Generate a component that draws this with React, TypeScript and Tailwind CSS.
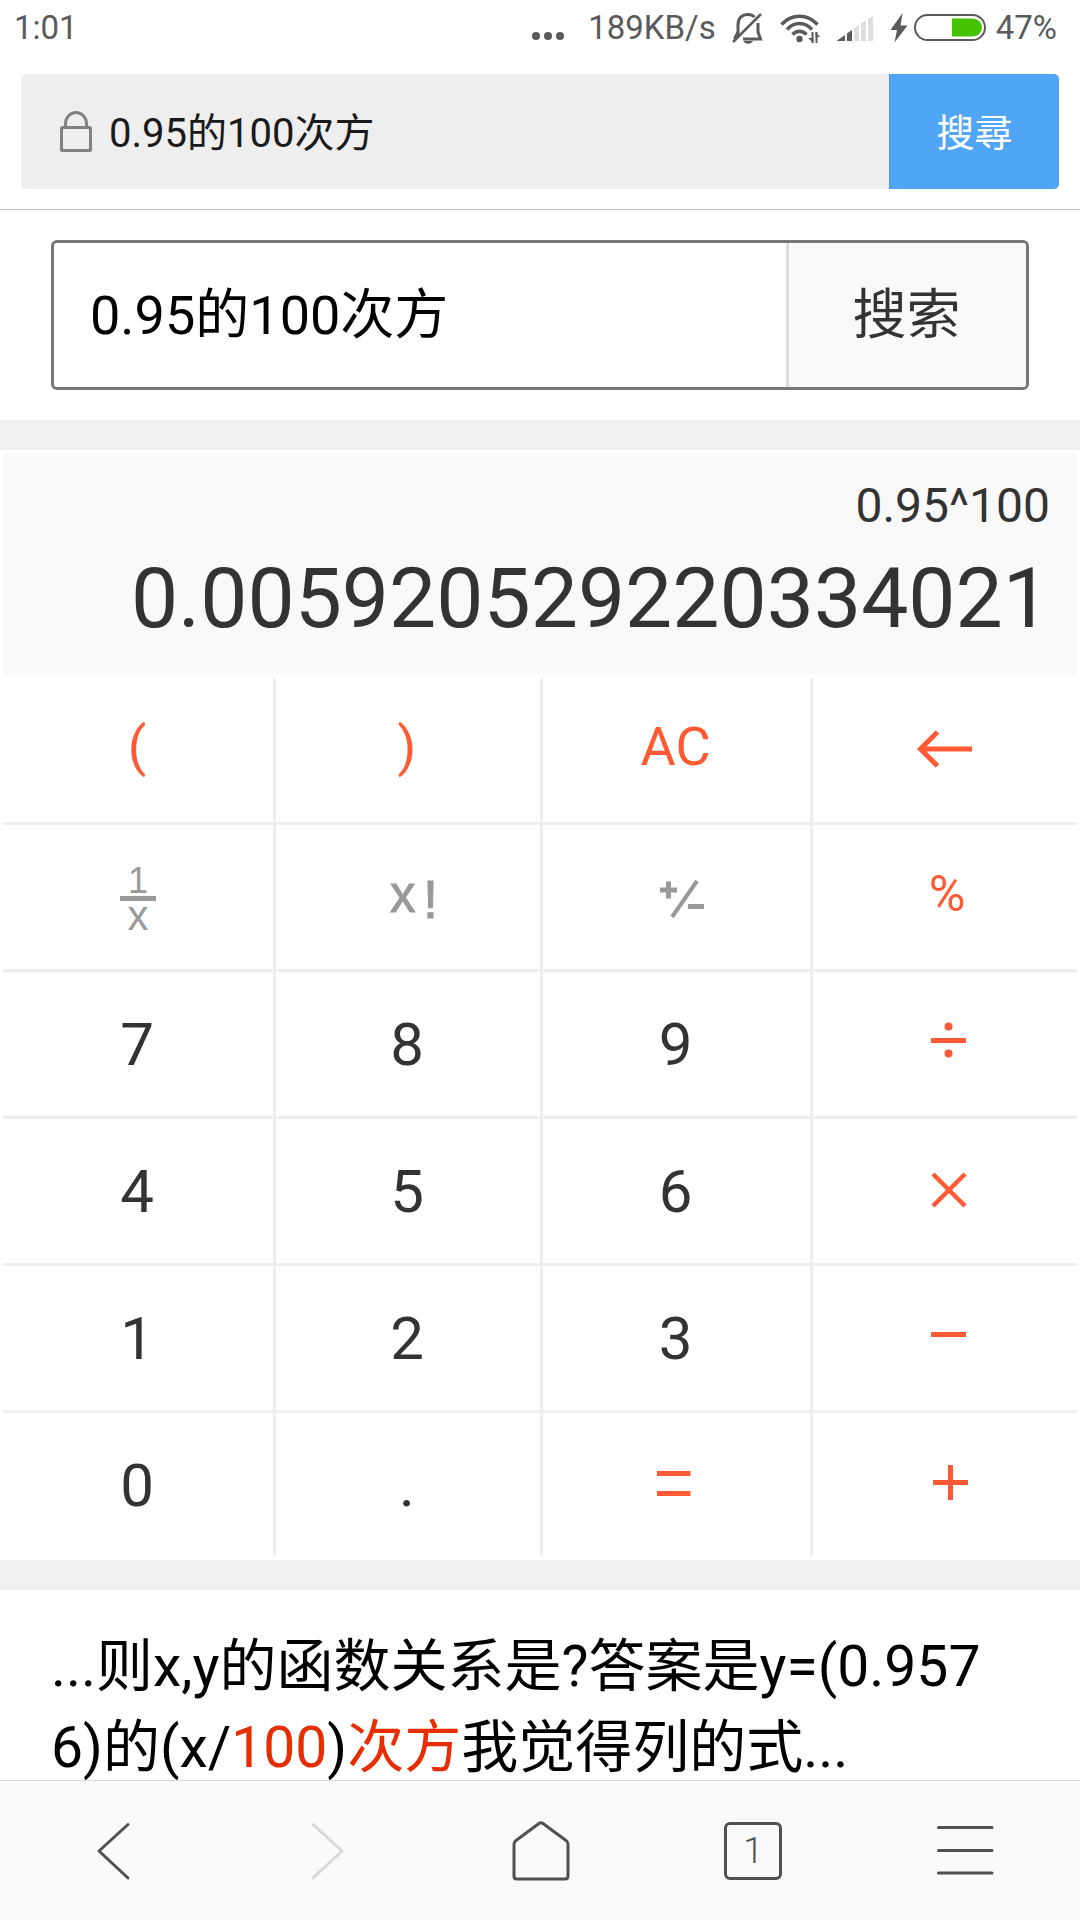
import React, { useState } from 'react';

type KeyDef = {
  label: string;
  content: React.ReactNode;
  className: string;
};

const digit = 'text-[60px] text-[#333] pt-0.5 pr-0.5';
const action = 'text-[54px] text-[#ff5a33] pb-2 pr-0.5';
const operator = 'text-[#ff5a33]';
const muted = 'text-[#999]';

const KeyIcon: React.FC<{ children: React.ReactNode }> = ({ children }) => (
  <svg
    width="64"
    height="64"
    viewBox="-32 -32 64 64"
    fill="none"
    stroke="currentColor"
    strokeWidth="5"
    className="overflow-visible"
  >
    {children}
  </svg>
);

const keys: KeyDef[] = [
  { label: 'open bracket', content: '(', className: action },
  { label: 'close bracket', content: ')', className: action },
  { label: 'all clear', content: 'AC', className: action },
  {
    label: 'backspace',
    className: operator,
    content: (
      <KeyIcon>
        <path d="M27 -1H-25M-7.500 -18L-24.500 -1L-7.500 16" />
      </KeyIcon>
    ),
  },
  {
    label: 'reciprocal',
    className: muted,
    content: (
      <span className="flex flex-col items-center pt-0.5 font-['Liberation_Sans',sans-serif]">
        <span className="text-[36px] leading-[30px]">1</span>
        <span className="h-[5px] w-9 bg-[#999]" />
        <span className="text-[42px] leading-[30px]">x</span>
      </span>
    ),
  },
  {
    label: 'factorial',
    className: muted,
    content: (
      <KeyIcon>
        <g fill="currentColor" strokeWidth="1" fontFamily="Liberation Sans, sans-serif">
          <text x="-18" y="15" fontSize="51">x</text>
          <text x="15" y="21" fontSize="54">!</text>
        </g>
      </KeyIcon>
    ),
  },
  {
    label: 'plus minus',
    className: muted,
    content: (
      <KeyIcon>
        <path d="M-17 -7H0M-8.500 -15.500V1.500M11 9.500H27" />
        <path d="M20 -16L-5 20" strokeWidth="4" />
      </KeyIcon>
    ),
  },
  { label: 'percent', content: '%', className: 'text-[50px] text-[#ff5a33] pb-1.5 pl-1' },
  { label: '7', content: '7', className: digit },
  { label: '8', content: '8', className: digit },
  { label: '9', content: '9', className: digit },
  {
    label: 'divide',
    className: operator,
    content: (
      <KeyIcon>
        <path d="M-14 -3.500H21" />
        <g fill="currentColor" stroke="none">
          <circle cx="3.500" cy="-17.500" r="4" />
          <circle cx="3.500" cy="9.500" r="4" />
        </g>
      </KeyIcon>
    ),
  },
  { label: '4', content: '4', className: digit },
  { label: '5', content: '5', className: digit },
  { label: '6', content: '6', className: digit },
  {
    label: 'multiply',
    className: operator,
    content: (
      <KeyIcon>
        <path d="M-12 -17L20 15M20 -17L-12 15" strokeWidth="4.500" />
      </KeyIcon>
    ),
  },
  { label: '1', content: '1', className: digit },
  { label: '2', content: '2', className: digit },
  { label: '3', content: '3', className: digit },
  {
    label: 'subtract',
    className: operator,
    content: (
      <KeyIcon>
        <path d="M-14 -3.500H21" />
      </KeyIcon>
    ),
  },
  { label: '0', content: '0', className: digit },
  { label: 'decimal point', content: '.', className: digit },
  {
    label: 'equals',
    className: operator,
    content: (
      <KeyIcon>
        <path d="M-20 -11.500H13.500M-20 8.500H13.500" />
      </KeyIcon>
    ),
  },
  {
    label: 'add',
    className: operator,
    content: (
      <KeyIcon>
        <path d="M-12 -2.500H23M5.500 -20V15" />
      </KeyIcon>
    ),
  },
];

const StatusBar: React.FC = () => (
  <div className="flex h-14 items-center justify-between pl-3.5 pr-[23px] font-['Roboto',sans-serif] text-[33px] leading-10 text-[#5a5a5a]">
    <span>1:01</span>
    <div className="flex items-center">
      <svg width="32" height="32" viewBox="0 0 32 32" fill="currentColor" className="mr-6">
        <circle cx="4" cy="24" r="4" />
        <circle cx="16" cy="24" r="4" />
        <circle cx="28" cy="24" r="4" />
      </svg>
      <span className="mr-4">189KB/s</span>
      {/* muted bell */}
      <svg width="32" height="32" viewBox="0 0 32 32" fill="none" stroke="currentColor" strokeWidth="3" className="mr-4">
        <path d="M6 23V13C6 6 10 2.500 16 2.500C18.500 2.500 21 3.500 22.500 5M26 11V20L28.500 27H11M6 20L2.500 27" />
        <path d="M1 30L29 2" strokeWidth="2.500" />
        <path d="M11.500 29H21C20 31 18.500 31.700 16.300 31.700C14 31.700 12.500 31 11.500 29Z" fill="currentColor" stroke="none" />
      </svg>
      {/* wifi with traffic arrows */}
      <svg width="40" height="30" viewBox="0 0 40 30" fill="none" stroke="currentColor" strokeWidth="3.500" className="mr-4">
        <path d="M1.500 11.500C11.500 0.500 27.500 0.500 37.500 11.500M7 16.500C14 8.500 25 8.500 32 16.500M12.500 21.500C16.500 17 22.500 17 26.500 21.500" />
        <circle cx="19.500" cy="26" r="3.200" fill="currentColor" stroke="none" />
        <path d="M32.500 19V30M36.500 19V30" strokeWidth="2" />
        <path d="M28 25L33.500 30V25ZM35.500 19V24H40Z" fill="currentColor" stroke="none" />
      </svg>
      <svg width="38" height="28" viewBox="0 0 38 28" fill="#dedede" className="mr-4">
        <path d="M0.500 27L9 21V27Z" fill="#5a5a5a" />
        <path d="M11 19.500L16 16V27H11Z" fill="#5a5a5a" />
        <path d="M18 14L23 11V27H18ZM25 9.500L30 6.500V27H25ZM32 5L37 2V27H32Z" />
      </svg>
      {/* charging bolt */}
      <svg width="18" height="30" viewBox="0 0 18 30" fill="currentColor" className="mr-1.5">
        <path d="M12.500 0L0.500 17H7L4.500 29.500L17.500 12.500H10.500Z" />
      </svg>
      <svg width="72" height="28" viewBox="0 0 72 28" className="mr-2.5">
        <rect x="1" y="1" width="70" height="25" rx="12.500" fill="none" stroke="currentColor" strokeWidth="2" />
        <path d="M38 4.500H59A9 9 0 0 1 59 22.500H38Z" fill="#46c300" />
      </svg>
      <span>47%</span>
    </div>
  </div>
);

const AddressBar: React.FC<{ query: string; onChange: (value: string) => void }> = ({ query, onChange }) => (
  <form
    onSubmit={(e) => e.preventDefault()}
    className="mx-[21px] mt-[18px] mb-5 flex h-[115px] overflow-hidden rounded-[5px] bg-[#eee]"
  >
    <label htmlFor="address" className="flex items-center pl-[38px] pr-4 text-[#808080]">
      <svg width="34" height="42" viewBox="0 0 34 42" fill="none" stroke="currentColor" strokeWidth="3" aria-label="secure">
        <rect x="2.500" y="16.500" width="29" height="23" rx="1" />
        <path d="M6.500 17V12.500A10.500 11 0 0 1 27.500 12.500V17" />
      </svg>
    </label>
    <input
      id="address"
      value={query}
      onChange={(e) => onChange(e.target.value)}
      className="min-w-0 flex-1 bg-transparent pt-1 text-[40px] text-[#1a1a1a] outline-none"
    />
    <button
      type="submit"
      className="w-[170px] border-l border-[#4a94d8] bg-[#50a5f4] pb-1 font-['Noto_Sans_CJK_TC',sans-serif] text-[38px] text-white"
    >
      搜尋
    </button>
  </form>
);

const Calculator: React.FC = () => (
  <section className="border-y-[30px] border-[#f0f0f0] font-['Roboto',sans-serif]">
    <div className="p-[3px]">
      <div className="mb-[3px] h-[222px] bg-[#f9f9f9] pt-[25px] pr-[27px] text-right text-[#333]">
        <div className="text-5xl leading-14">0.95^100</div>
        <output className="mt-[19px] block text-[84px] leading-[92px]">0.005920529220334021</output>
      </div>
      <div className="grid auto-rows-[144px] grid-cols-[270fr_264fr_267fr_264fr] gap-[3px] bg-[#eee]">
        {keys.map((key) => (
          <button
            key={key.label}
            type="button"
            aria-label={key.label}
            className={`flex items-center justify-center bg-white ${key.className}`}
          >
            {key.content}
          </button>
        ))}
      </div>
    </div>
  </section>
);

const NavBar: React.FC = () => {
  const item = 'flex items-center justify-center';

  return (
    <nav className="grid h-[140px] shrink-0 grid-cols-5 border-t border-[#dadada] bg-[#fafafa] px-[7px] text-[#505050]">
      <button type="button" aria-label="Back" className={item}>
        <svg width="60" height="60" viewBox="0 0 60 60" fill="none" stroke="currentColor" strokeWidth="3" strokeLinecap="round" strokeLinejoin="round">
          <path d="M44 3.500L15 30L44 57" />
        </svg>
      </button>
      <button type="button" aria-label="Forward" disabled className={`${item} text-[#d8d8d8]`}>
        <svg width="60" height="60" viewBox="0 0 60 60" fill="none" stroke="currentColor" strokeWidth="3" strokeLinecap="round" strokeLinejoin="round">
          <path d="M16 3.500L45 30L16 57" />
        </svg>
      </button>
      <button type="button" aria-label="Home" className={item}>
        <svg width="60" height="60" viewBox="0 0 60 60" fill="none" stroke="currentColor" strokeWidth="3" strokeLinejoin="round">
          <path d="M29 2.500Q31 1 33 2.500L56 19.500Q58 21 58 23V55Q58 58 55 58H7Q4 58 4 55V23Q4 21 6 19.500Z" />
        </svg>
      </button>
      <button type="button" aria-label="Tabs" className={item}>
        <span className="flex size-[58px] items-center justify-center rounded-md border-[3px] border-[#505050] font-['Roboto',sans-serif] text-4xl font-light">
          1
        </span>
      </button>
      <button type="button" aria-label="Menu" className={item}>
        <svg width="60" height="60" viewBox="0 0 60 60" fill="none" stroke="currentColor" strokeWidth="3" strokeLinecap="round">
          <path d="M2.500 6.500H56M2.500 29.500H56M2.500 52H56" />
        </svg>
      </button>
    </nav>
  );
};

export default function App() {
  const [address, setAddress] = useState('0.95的100次方');
  const [query, setQuery] = useState('0.95的100次方');

  return (
    <div className="flex h-screen flex-col bg-white font-['Roboto','Noto_Sans_CJK_SC',sans-serif]">
      <header className="shrink-0 border-b border-[#bdbdbd]">
        <StatusBar />
        <AddressBar query={address} onChange={setAddress} />
      </header>

      <main className="min-h-0 flex-1 overflow-hidden">
        <form
          onSubmit={(e) => e.preventDefault()}
          className="mx-[51px] my-[30px] flex h-[150px] overflow-hidden rounded-md border-[3px] border-[#777]"
        >
          <input
            aria-label="搜索"
            value={query}
            onChange={(e) => setQuery(e.target.value)}
            className="min-w-0 flex-1 pl-9 text-[54px] text-black outline-none"
          />
          <button type="submit" className="w-60 border-l-[3px] border-[#ddd] bg-[#f9f9f9] pr-0.5 text-[54px] text-[#333]">
            搜索
          </button>
        </form>

        <Calculator />

        <p className="px-[51px] pt-9 text-[57px] leading-[81px] text-black">
          ...则x,y的函数关系是?答案是y=(0.957
          <br />
          6)的(x/<em className="text-[#e62e00] not-italic">100</em>)<em className="text-[#e62e00] not-italic">次方</em>我觉得列的式...
        </p>
      </main>

      <NavBar />
    </div>
  );
}
